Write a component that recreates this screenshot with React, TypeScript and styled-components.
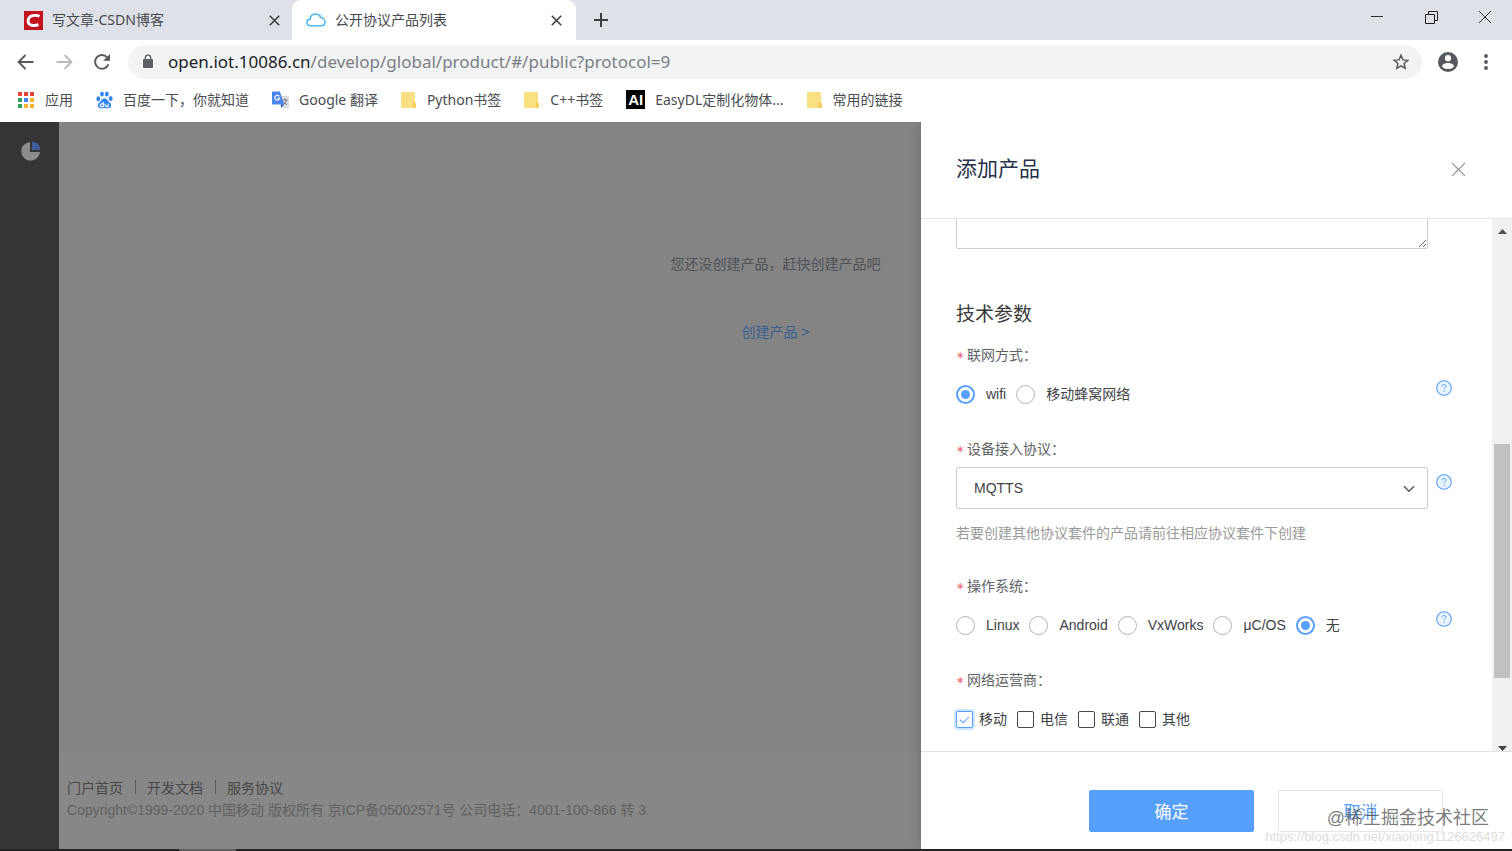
import React from 'react';
import styled, { createGlobalStyle, css } from 'styled-components';

const uiFont = '"Noto Sans", "Noto Sans CJK SC", sans-serif';
const pageFont = '"Liberation Sans", "Noto Sans CJK SC", sans-serif';
const blue = '#569ffd';

const GlobalStyle = createGlobalStyle`
  *, *::before, *::after { box-sizing: border-box; }
  body { margin: 0; font-family: ${pageFont}; font-size: 14px; line-height: 20px; background: #fff; }
  button, input, select, textarea { font: inherit; margin: 0; }
  button { border: 0; padding: 0; background: none; color: inherit; }
  a { color: inherit; text-decoration: none; }
  svg { display: block; flex: none; }
`;

const Window = styled.div`
  min-height: 100vh;
  display: flex;
  flex-direction: column;
  position: relative;
`;

/* ---------- browser chrome ---------- */

const TabStrip = styled.div`
  display: flex;
  height: 40px;
  background: #dee1e8;
  font-family: ${uiFont};
`;

const Tab = styled.div<{ $active?: boolean }>`
  width: ${(p) => (p.$active ? 284 : 292)}px;
  display: flex;
  align-items: center;
  gap: 9px;
  padding: 0 ${(p) => (p.$active ? 14 : 12)}px 0 ${(p) => (p.$active ? 14 : 24)}px;
  color: #45494d;
  ${(p) =>
    p.$active &&
    css`
      background: #fff;
      border-radius: 9px 9px 0 0;
    `}
`;

const TabTitle = styled.span`
  flex: 1;
  white-space: nowrap;
`;

const IconButton = styled.button<{ $w: number }>`
  width: ${(p) => p.$w}px;
  flex: none;
  display: flex;
  align-items: center;
  justify-content: center;
`;

const WindowControls = styled.div`
  display: flex;
  height: 34px;
  margin-left: auto;
`;

const Toolbar = styled.div`
  display: flex;
  align-items: center;
  height: 43px;
  padding: 0 7px;
`;

const Omnibox = styled.div`
  flex: 1;
  height: 34px;
  margin: 0 7px;
  padding: 0 12px 0 14px;
  display: flex;
  align-items: center;
  gap: 14px;
  border-radius: 17px;
  background: #f1f3f5;
`;

const Address = styled.div`
  flex: 1;
  font-family: ${uiFont};
  font-size: 17px;
  line-height: 24px;
  color: #7b7f83;
  white-space: nowrap;
  b { font-weight: 400; color: #202124; }
`;

const Bookmarks = styled.nav`
  display: flex;
  align-items: center;
  gap: 23px;
  height: 39px;
  padding: 0 17px 6px;
  font-family: ${uiFont};
  color: #4a4d51;
`;

const Bookmark = styled.a`
  display: flex;
  align-items: center;
  gap: 10px;
  white-space: nowrap;
`;

/* ---------- page behind the drawer ---------- */

const Page = styled.div`
  flex: 1;
  display: flex;
  position: relative;
  overflow: hidden;
`;

const Sidebar = styled.aside`
  width: 59px;
  padding: 19px 0 0 21px;
  background: #353537;
`;

const Main = styled.main`
  flex: 1;
  display: flex;
  flex-direction: column;
  background: #848484;
`;

const Empty = styled.div`
  flex: 1;
  display: flex;
  flex-direction: column;
  align-items: center;
  gap: 48px;
  padding: 132px 20px 0 0;
  color: #4f5257;
`;

const CreateLink = styled.a`
  color: #3d5f8f;
`;

const PageFooter = styled.footer`
  height: 98px;
  padding: 26px 8px 0;
  background: #878787;
  color: #626262;
  line-height: 22px;
  p { margin: 0; }
`;

const FooterLinks = styled.div`
  display: flex;
  align-items: center;
  color: #484848;
  a + a {
    margin-left: 12px;
    padding-left: 12px;
    position: relative;
  }
  a + a::before {
    content: '';
    position: absolute;
    left: 0;
    top: 3px;
    height: 14px;
    border-left: 1px solid #5a5a5a;
  }
`;

/* ---------- drawer ---------- */

const Drawer = styled.section`
  position: absolute;
  top: 0;
  right: 0;
  bottom: 0;
  width: 591px;
  display: flex;
  flex-direction: column;
  background: #fff;
  box-shadow: 0 0 12px rgba(0, 0, 0, 0.2);
`;

const DrawerHeader = styled.header`
  display: flex;
  align-items: center;
  justify-content: space-between;
  height: 97px;
  padding: 0 46px 2px 35px;
  border-bottom: 1px solid #e6e6e6;
  h2 {
    margin: 0;
    font-size: 21px;
    line-height: 32px;
    font-weight: 400;
    color: #26304a;
  }
`;

const DrawerBody = styled.div`
  flex: 1;
  display: flex;
  min-height: 0;
`;

const Form = styled.form`
  flex: 1;
  padding-left: 35px;
`;

const Description = styled.textarea`
  display: block;
  width: 472px;
  height: 30px;
  border: 1px solid #cfcfcf;
  border-top: 0;
  border-radius: 0 0 2px 2px;
  resize: vertical;
  outline: 0;
`;

const SectionTitle = styled.h3`
  margin: 52px 0 16px;
  font-size: 19px;
  line-height: 28px;
  font-weight: 400;
  color: #3a3a3a;
`;

const Field = styled.fieldset`
  margin: 0 0 24px;
  padding: 0;
  border: 0;
  min-width: 0;
`;

const FieldLabel = styled.legend`
  display: flex;
  height: 20px;
  padding: 0;
  margin-bottom: 8px;
  color: #606266;
`;

const Star = styled.span`
  width: 11px;
  padding-top: 2px;
  color: #f2525f;
  font-family: "DejaVu Sans Mono", monospace;
`;

const ControlRow = styled.div`
  display: flex;
  align-items: flex-start;
  gap: 8px;
`;

const Control = styled.div`
  width: 472px;
  height: 42px;
  display: flex;
  align-items: center;
  gap: 10px;
  position: relative;
`;

const Choice = styled.label<{ $gap: number }>`
  display: flex;
  align-items: center;
  gap: ${(p) => p.$gap}px;
  color: #404246;
  white-space: nowrap;
`;

const Radio = styled.input`
  appearance: none;
  width: 19px;
  height: 19px;
  border: 1px solid #b4b4b4;
  border-radius: 50%;
  background: #fff;
  display: grid;
  place-items: center;
  &:checked { border: 2px solid ${blue}; }
  &:checked::after {
    content: '';
    width: 9px;
    height: 9px;
    border-radius: 50%;
    background: ${blue};
  }
`;

const Checkbox = styled.input`
  appearance: none;
  width: 17px;
  height: 17px;
  border: 1px solid #45484d;
  border-radius: 2px;
  background: #fff;
  display: grid;
  justify-items: center;
  &:checked {
    border-color: ${blue};
    box-shadow: 0 0 0 2px #cfe4ff;
  }
  &:checked::after {
    content: '';
    width: 5px;
    height: 9px;
    margin-top: 2px;
    border: solid ${blue};
    border-width: 0 1px 1px 0;
    transform: rotate(45deg);
  }
`;

const Select = styled.select`
  appearance: none;
  width: 100%;
  height: 42px;
  padding: 0 40px 0 17px;
  border: 1px solid #cfcfcf;
  border-radius: 2px;
  background: #fff;
  color: #404246;
`;

const Chevron = styled.svg`
  position: absolute;
  right: 13px;
  top: 18px;
  pointer-events: none;
`;

const HelpButton = styled.button`
  margin-top: 7px;
`;

const Hint = styled.p`
  margin: 14px 0 9px;
  color: #999;
`;

const Scrollbar = styled.div`
  width: 20px;
  display: flex;
  flex-direction: column;
  align-items: center;
  background: #f1f1f1;
`;

const ScrollArrow = styled.button<{ $down?: boolean }>`
  height: 15px;
  display: flex;
  align-items: flex-end;
  justify-content: center;
`;

const ScrollTrack = styled.div`
  flex: 1;
  width: 16px;
  display: flex;
  flex-direction: column;
  &::before { content: ''; flex: 210; }
  &::after { content: ''; flex: 58; }
`;

const ScrollThumb = styled.div`
  flex: 233;
  background: #c1c1c1;
`;

const DrawerFooter = styled.footer`
  display: flex;
  justify-content: flex-end;
  gap: 24px;
  height: 98px;
  padding: 38px 69px 0 0;
  border-top: 1px solid #e2e2e2;
`;

const ActionButton = styled.button<{ $primary?: boolean }>`
  width: 165px;
  height: 42px;
  padding-top: 3px;
  border-radius: 2px;
  font-size: 17px;
  border: 1px solid ${(p) => (p.$primary ? blue : '#e6e6e6')};
  background: ${(p) => (p.$primary ? blue : '#fff')};
  color: ${(p) => (p.$primary ? '#fff' : blue)};
`;

const Taskbar = styled.div`
  height: 2px;
  padding-left: 179px;
  background: #222224;
  &::before {
    content: '';
    display: block;
    width: 57px;
    height: 2px;
    background: #5c5c5e;
  }
`;

const Watermark = styled.div`
  position: absolute;
  right: 7px;
  bottom: 5px;
  display: flex;
  flex-direction: column;
  align-items: flex-end;
  pointer-events: none;
  white-space: nowrap;
`;

const Community = styled.span`
  margin-right: 16px;
  font-size: 18px;
  line-height: 20px;
  color: rgba(80, 80, 80, 0.75);
`;

const BlogUrl = styled.span`
  font-size: 13px;
  line-height: 18px;
  color: #dcdcdc;
`;

/* ---------- icons ---------- */

const Cross = ({ size, width, color }: { size: number; width: number; color: string }) => (
  <svg width={size} height={size} viewBox="0 0 14 14" stroke={color} strokeWidth={width} fill="none">
    <path d="M1 1 13 13M13 1 1 13" />
  </svg>
);

const CsdnIcon = () => (
  <svg width="19" height="19" viewBox="0 0 19 19">
    <rect width="19" height="19" fill="#c3141d" />
    <path d="M15.5 5.2C12 3.8 4.6 3.6 4.1 9.6c-.4 5.600 6.500 5.400 10.400 4.100" fill="none" stroke="#fff" strokeWidth="2.900" />
  </svg>
);

const CloudIcon = () => (
  <svg width="20" height="14" viewBox="0 0 20 14" fill="none" stroke="#4fb9ee" strokeWidth="1.500">
    <path d="M4.500 12.800C2.300 12.800.9 11.400.9 9.500c0-1.800 1.300-3.100 3.200-3.200C4.400 3.200 6.600 1 9.500 1c2.400 0 4.300 1.400 5.100 3.600 1.700.1 4.500 1.600 4.500 4.400 0 2.400-1.700 3.800-3.900 3.800z" />
    <path d="M14 1.200c1.500.3 2.500 1.200 2.900 2.600" stroke="#9bdcf6" strokeWidth="1" />
  </svg>
);

const AppsIcon = () => {
  const colors = ['#e4453a', '#e4453a', '#e4453a', '#34a05a', '#3f83ee', '#f3b32a', '#34a05a', '#f3b32a', '#f3b32a'];
  return (
    <svg width="18" height="18" viewBox="0 0 18 18">
      {colors.map((c, i) => (
        <rect key={i} x={1 + (i % 3) * 6} y={1 + Math.floor(i / 3) * 6} width="4" height="4" fill={c} />
      ))}
    </svg>
  );
};

const BaiduIcon = () => (
  <svg width="17" height="18" viewBox="0 0 17 18" fill="#3385f5">
    <ellipse cx="2.300" cy="7.800" rx="1.900" ry="2.500" />
    <ellipse cx="6" cy="3.100" rx="1.900" ry="2.500" />
    <ellipse cx="10.800" cy="3.100" rx="1.900" ry="2.500" />
    <ellipse cx="14.700" cy="7.400" rx="1.900" ry="2.500" />
    <path d="M8.500 7.200c2.400 0 3 2.300 4.400 3.500 2 1.600 2.800 3.200 1.900 5-1 2-3.400 1.800-6.300 1.400-2.900.4-5.300.6-6.300-1.400-.9-1.800-.1-3.400 1.900-5C5.500 9.500 6.100 7.200 8.500 7.200z" />
    <path d="M7.300 11v4.600H5.700c-2 0-2-2.700 0-2.700h1.600M9.200 12.800v1.800c0 1 .6 1 2.900 1v-2.900" fill="none" stroke="#fff" strokeWidth="1.100" />
  </svg>
);

const TranslateIcon = () => (
  <svg width="17" height="18" viewBox="0 0 17 18">
    <path d="M7 5h9c.6 0 1 .4 1 1v10.500c0 .6-.4 1-1 1h-5z" fill="#dcdde0" />
    <path d="M10.500 9h5M13 7.500V9M11 13.500c2-1 3.200-2.700 3.500-4.500M11.500 10.500c.5 1.300 2 2.600 3.500 3" fill="none" stroke="#72787f" strokeWidth="1" />
    <path d="M1 .5h7L12 13.500H1c-.6 0-1-.4-1-1v-11c0-.6.4-1 1-1z" fill="#4a86ee" />
    <path d="M8.500 13.500H12l-2.600 3.500z" fill="#2b52b8" />
    <path d="M7.200 5.200A2.400 2.400 0 1 0 7.700 7H5.600" fill="none" stroke="#fff" strokeWidth="1.200" />
  </svg>
);

const FolderIcon = () => (
  <svg width="16" height="18" viewBox="0 0 16 18">
    <rect x="0" y="1" width="14" height="16" rx="1" fill="#fbdf83" />
    <path d="M11.500 17v-4.200c0-1 .7-1.600 1.700-1.600s1.800.7 1.800 1.600V17z" fill="#f5cf5b" />
  </svg>
);

const AiLogo = styled.span`
  width: 19px;
  height: 19px;
  background: #000;
  color: #fff;
  font-family: ${pageFont};
  font-weight: 700;
  font-size: 15px;
  line-height: 19px;
  text-align: center;
`;

const BackArrow = ({ color, flip }: { color: string; flip?: boolean }) => (
  <svg width="18" height="16" viewBox="0 0 18 16" fill="none" stroke={color} strokeWidth="1.800">
    <path d={flip ? 'M1.500 8H16M9.500 1l7 7-7 7' : 'M16.500 8H2M8.500 1l-7 7 7 7'} />
  </svg>
);

const ReloadIcon = () => (
  <svg width="18" height="18" viewBox="0 0 18 18">
    <path d="M15.400 11.400A6.900 6.900 0 1 1 14.200 4.300" fill="none" stroke="#55585c" strokeWidth="1.900" />
    <path d="M17 1v6.800h-6.800z" fill="#55585c" />
  </svg>
);

const LockIcon = () => (
  <svg width="12" height="15" viewBox="0 0 12 15">
    <rect x="1" y="5" width="10" height="9" rx="1" fill="#5c5f63" />
    <path d="M3.300 5.500V3.800a2.700 2.700 0 0 1 5.400 0v1.700" fill="none" stroke="#5c5f63" strokeWidth="1.400" />
  </svg>
);

const StarIcon = () => (
  <svg width="18" height="18" viewBox="0 0 18 18" fill="none" stroke="#55585c" strokeWidth="1.500">
    <path d="M9 2.300l1.900 4.600 4.900.4-3.700 3.200 1.100 4.800L9 12.800l-4.200 2.500 1.100-4.800-3.700-3.200 4.900-.4z" />
  </svg>
);

const AccountIcon = () => (
  <svg width="20" height="20" viewBox="0 0 20 20">
    <circle cx="10" cy="10" r="10" fill="#55585c" />
    <circle cx="10" cy="6.200" r="3.100" fill="#fff" />
    <path d="M4 14.200c0-2.100 4-3.200 6-3.200s6 1.100 6 3.200c-1.300 1.900-3.500 2.900-6 2.900s-4.700-1-6-2.900z" fill="#fff" />
  </svg>
);

const MenuIcon = () => (
  <svg width="4" height="16" viewBox="0 0 4 16" fill="#55585c">
    <circle cx="2" cy="2" r="1.900" />
    <circle cx="2" cy="8" r="1.900" />
    <circle cx="2" cy="14" r="1.900" />
  </svg>
);

const PieIcon = () => (
  <svg width="20" height="20" viewBox="0 0 20 20">
    <path d="M9 1v10h10a9.400 9.400 0 1 1-10-10z" fill="#8c8c8c" />
    <path d="M11 .5A9 9 0 0 1 19.500 9H11z" fill="#3f5d97" />
  </svg>
);

const HelpIcon = () => (
  <svg width="16" height="16" viewBox="0 0 16 16" fill="none" stroke={blue}>
    <circle cx="8" cy="8" r="7.300" fill="#eaf4ff" strokeWidth="1.100" />
    <path d="M6 6.300c0-1.200.9-1.900 2-1.900s2 .7 2 1.700c0 1.400-2 1.500-2 3.200" strokeWidth="1" />
    <path d="M8 10.700v1.200" strokeWidth="1.100" />
  </svg>
);

/* ---------- composed parts ---------- */

const Help = () => (
  <HelpButton type="button" aria-label="帮助"><HelpIcon /></HelpButton>
);

const RequiredLabel = ({ children }: { children: React.ReactNode }) => (
  <FieldLabel><Star>*</Star>{children}</FieldLabel>
);

const RadioGroup = ({ name, options, selected }: { name: string; options: string[]; selected: string }) => (
  <Control>
    {options.map((o) => (
      <Choice key={o} $gap={11}>
        <Radio type="radio" name={name} value={o} defaultChecked={o === selected} />
        {o}
      </Choice>
    ))}
  </Control>
);

const bookmarks: { icon: React.ReactNode; label: string }[] = [
  { icon: <AppsIcon />, label: '应用' },
  { icon: <BaiduIcon />, label: '百度一下，你就知道' },
  { icon: <TranslateIcon />, label: 'Google 翻译' },
  { icon: <FolderIcon />, label: 'Python书签' },
  { icon: <FolderIcon />, label: 'C++书签' },
  { icon: <AiLogo>AI</AiLogo>, label: 'EasyDL定制化物体...' },
  { icon: <FolderIcon />, label: '常用的链接' },
];

export default function App() {
  return (
    <Window>
      <GlobalStyle />
      <TabStrip>
        <Tab>
          <CsdnIcon />
          <TabTitle>写文章-CSDN博客</TabTitle>
          <IconButton $w={12} aria-label="关闭标签页"><Cross size={11} width={2} color="#3c4043" /></IconButton>
        </Tab>
        <Tab $active>
          <CloudIcon />
          <TabTitle>公开协议产品列表</TabTitle>
          <IconButton $w={12} aria-label="关闭标签页"><Cross size={11} width={2} color="#3c4043" /></IconButton>
        </Tab>
        <IconButton $w={50} aria-label="新标签页">
          <svg width="14" height="14" viewBox="0 0 14 14" stroke="#3c4043" strokeWidth="2"><path d="M7 0v14M0 7h14" /></svg>
        </IconButton>
        <WindowControls>
          <IconButton $w={54} aria-label="最小化">
            <svg width="12" height="12" viewBox="0 0 12 12" stroke="#333"><path d="M0 5.500h12" /></svg>
          </IconButton>
          <IconButton $w={54} aria-label="还原">
            <svg width="13" height="13" viewBox="0 0 13 13" fill="none" stroke="#222"><path d="M.5 3.500h9v9h-9zM3.500 3V.5h9v9H10" /></svg>
          </IconButton>
          <IconButton $w={54} aria-label="关闭"><Cross size={14} width={1} color="#333" /></IconButton>
        </WindowControls>
      </TabStrip>
      <Toolbar>
        <IconButton $w={38} aria-label="后退"><BackArrow color="#55585c" /></IconButton>
        <IconButton $w={38} aria-label="前进"><BackArrow color="#babcbe" flip /></IconButton>
        <IconButton $w={38} aria-label="刷新"><ReloadIcon /></IconButton>
        <Omnibox>
          <LockIcon />
          <Address><b>open.iot.10086.cn</b>/develop/global/product/#/public?protocol=9</Address>
          <IconButton $w={18} aria-label="收藏"><StarIcon /></IconButton>
        </Omnibox>
        <IconButton $w={38} aria-label="账户"><AccountIcon /></IconButton>
        <IconButton $w={38} aria-label="菜单"><MenuIcon /></IconButton>
      </Toolbar>
      <Bookmarks>
        {bookmarks.map((b) => (
          <Bookmark key={b.label} href="#">{b.icon}{b.label}</Bookmark>
        ))}
      </Bookmarks>

      <Page>
        <Sidebar><PieIcon /></Sidebar>
        <Main>
          <Empty>
            <span>您还没创建产品，赶快创建产品吧</span>
            <CreateLink href="#">创建产品 &gt;</CreateLink>
          </Empty>
          <PageFooter>
            <FooterLinks>
              <a href="#">门户首页</a>
              <a href="#">开发文档</a>
              <a href="#">服务协议</a>
            </FooterLinks>
            <p>Copyright©1999-2020 中国移动 版权所有 京ICP备05002571号 公司电话：4001-100-866 转 3</p>
          </PageFooter>
        </Main>

        <Drawer>
          <DrawerHeader>
            <h2>添加产品</h2>
            <IconButton $w={15} aria-label="关闭"><Cross size={15} width={1} color="#8c8c8c" /></IconButton>
          </DrawerHeader>
          <DrawerBody>
            <Form>
              <Description aria-label="产品描述" />
              <SectionTitle>技术参数</SectionTitle>
              <Field>
                <RequiredLabel>联网方式：</RequiredLabel>
                <ControlRow>
                  <RadioGroup name="network" options={['wifi', '移动蜂窝网络']} selected="wifi" />
                  <Help />
                </ControlRow>
              </Field>
              <Field>
                <RequiredLabel>设备接入协议：</RequiredLabel>
                <ControlRow>
                  <Control>
                    <Select aria-label="设备接入协议" defaultValue="MQTTS">
                      <option>MQTTS</option>
                    </Select>
                    <Chevron width="12" height="8" viewBox="0 0 12 8" fill="none" stroke="#55585c" strokeWidth="1.400">
                      <path d="M1 1.200l5 5 5-5" />
                    </Chevron>
                  </Control>
                  <Help />
                </ControlRow>
                <Hint>若要创建其他协议套件的产品请前往相应协议套件下创建</Hint>
              </Field>
              <Field>
                <RequiredLabel>操作系统：</RequiredLabel>
                <ControlRow>
                  <RadioGroup name="os" options={['Linux', 'Android', 'VxWorks', 'μC/OS', '无']} selected="无" />
                  <Help />
                </ControlRow>
              </Field>
              <Field>
                <RequiredLabel>网络运营商：</RequiredLabel>
                <Control>
                  {['移动', '电信', '联通', '其他'].map((o, i) => (
                    <Choice key={o} $gap={6}>
                      <Checkbox type="checkbox" defaultChecked={i === 0} />
                      {o}
                    </Choice>
                  ))}
                </Control>
              </Field>
            </Form>
            <Scrollbar>
              <ScrollArrow type="button" aria-label="向上滚动">
                <svg width="9" height="5" viewBox="0 0 9 5"><path d="M0 5 4.500 0 9 5z" fill="#505050" /></svg>
              </ScrollArrow>
              <ScrollTrack><ScrollThumb /></ScrollTrack>
              <ScrollArrow type="button" aria-label="向下滚动">
                <svg width="9" height="5" viewBox="0 0 9 5"><path d="M0 0 4.500 5 9 0z" fill="#404040" /></svg>
              </ScrollArrow>
            </Scrollbar>
          </DrawerBody>
          <DrawerFooter>
            <ActionButton type="button" $primary>确定</ActionButton>
            <ActionButton type="button">取消</ActionButton>
          </DrawerFooter>
        </Drawer>
      </Page>
      <Taskbar />
      <Watermark>
        <Community>@稀土掘金技术社区</Community>
        <BlogUrl>https://blog.csdn.net/xiaolong1126626497</BlogUrl>
      </Watermark>
    </Window>
  );
}
